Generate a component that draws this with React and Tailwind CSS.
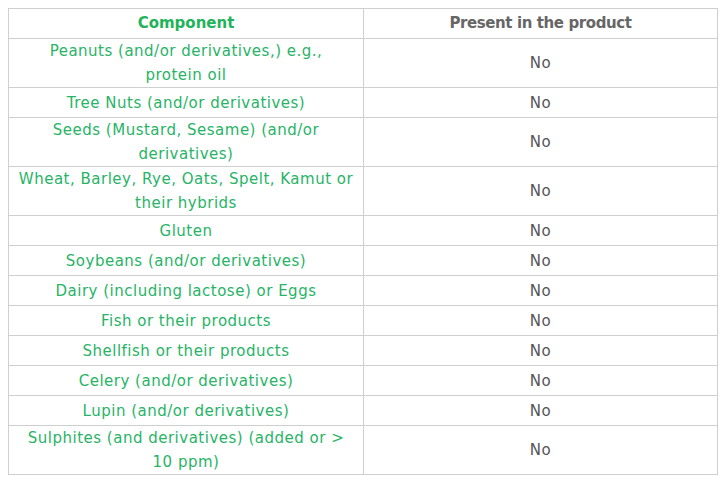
const rows = [
  ["Peanuts (and/or derivatives,) e.g.,", "protein oil"],
  ["Tree Nuts (and/or derivatives)"],
  ["Seeds (Mustard, Sesame) (and/or", "derivatives)"],
  ["Wheat, Barley, Rye, Oats, Spelt, Kamut or", "their hybrids"],
  ["Gluten"],
  ["Soybeans (and/or derivatives)"],
  ["Dairy (including lactose) or Eggs"],
  ["Fish or their products"],
  ["Shellfish or their products"],
  ["Celery (and/or derivatives)"],
  ["Lupin (and/or derivatives)"],
  ["Sulphites (and derivatives) (added or >", "10 ppm)"],
];

export default function App() {
  return (
    <div className="min-h-screen bg-white pt-[8px] pl-[8px]" style={{ fontFamily: "'DejaVu Sans', 'Open Sans', sans-serif" }}>
      <table className="w-[709px] border-collapse table-fixed text-[15px] leading-[24px]">
        <colgroup>
          <col className="w-[355px]" />
          <col className="w-[354px]" />
        </colgroup>
        <thead>
          <tr className="h-[30px]">
            <th className="border border-[#cfcfcf] p-0 pb-[2px] text-center font-bold text-[#1fb35a]">Component</th>
            <th className="border border-[#cfcfcf] p-0 pb-[2px] text-center font-bold tracking-[-0.4px] text-[#666666]">Present in the product</th>
          </tr>
        </thead>
        <tbody>
          {rows.map((lines) => (
            <tr key={lines[0]} className="h-[30px]">
              <td className="border border-[#cfcfcf] px-[4px] py-0 text-center whitespace-nowrap tracking-[0.5px] text-[#27b466]">
                {lines.map((l, i) => (
                  <div key={i}>{l}</div>
                ))}
              </td>
              <td className="border border-[#cfcfcf] p-0 text-center tracking-[0.5px] text-[#555555]">No</td>
            </tr>
          ))}
        </tbody>
      </table>
    </div>
  );
}
